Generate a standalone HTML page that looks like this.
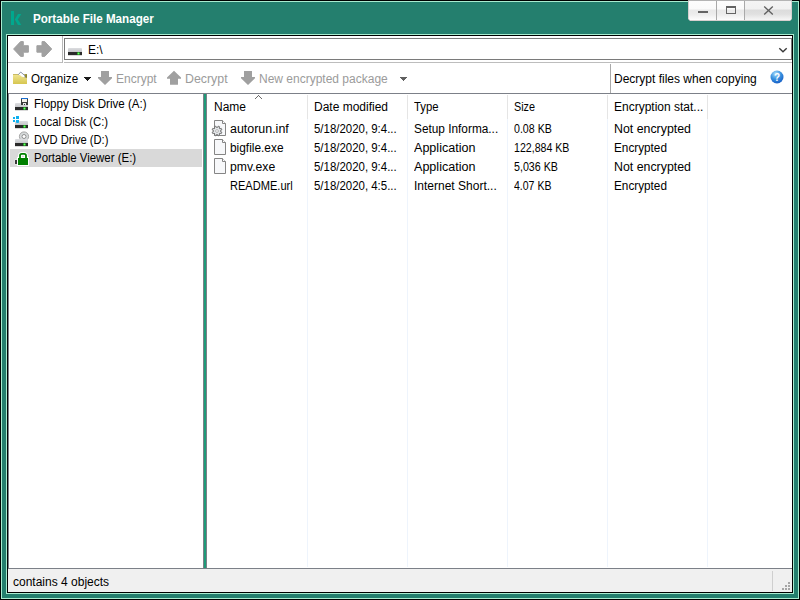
<!DOCTYPE html>
<html><head><meta charset="utf-8"><style>
*{margin:0;padding:0;box-sizing:border-box}
html,body{width:800px;height:600px;overflow:hidden}
body{position:relative;background:#000;font-family:"Liberation Sans",sans-serif;font-size:12px;color:#000}
.a{position:absolute}
.t{position:absolute;white-space:nowrap;line-height:14px;transform-origin:0 0}
.g{color:#9b9b9b}
.w{color:#fff}
</style></head><body>
<!-- frame -->
<div class="a" style="left:1px;top:1px;width:798px;height:598px;background:#a8ecd0"></div>
<div class="a" style="left:2px;top:2px;width:796px;height:596px;background:#247f6e"></div>
<div class="a" style="left:6px;top:34px;width:788px;height:560px;background:#a8ecd0"></div>
<div class="a" style="left:7px;top:35px;width:786px;height:558px;background:#000"></div>
<div class="a" style="left:8px;top:36px;width:784px;height:556px;background:#fff"></div>

<!-- title -->
<svg class="a" style="left:8px;top:8px" width="20" height="20" viewBox="0 0 20 20">
<rect x="3" y="3" width="3" height="14" fill="#00a88e"/>
<path d="M10 6 L13.3 6 L9.8 11.5 L13.3 17 L10 17 L6.8 11.5 Z" fill="#00a88e"/>
</svg>
<div class="t w" style="left:33px;top:12px;font-weight:bold;transform:scaleX(.968)">Portable File Manager</div>

<!-- window buttons -->
<div class="a" style="left:688px;top:0;width:104px;height:21px;background:#d6cfcf;clip-path:polygon(0 0,100% 0,100% calc(100% - 2px),calc(100% - 2px) 100%,2px 100%,0 calc(100% - 2px))"></div>
<div class="a" style="left:689px;top:1px;width:102px;height:19px;background:linear-gradient(#fdfdfd 0,#fafafa 8px,#e9e9e9 9px,#ececec 13px,#fdfdfd 19px);clip-path:polygon(0 0,100% 0,100% calc(100% - 1px),calc(100% - 1px) 100%,1px 100%,0 calc(100% - 1px))"></div>
<div class="a" style="left:745px;top:1px;width:46px;height:19px;background:linear-gradient(#f4f4f4 0,#f1f1f1 8px,#dcdcdc 9px,#e0e0e0 13px,#f6f6f6 19px);clip-path:polygon(0 0,100% 0,100% calc(100% - 1px),calc(100% - 1px) 100%,0 100%)"></div>
<div class="a" style="left:688px;top:0;width:104px;height:1px;background:#b4b4b4"></div>
<div class="a" style="left:716px;top:1px;width:1px;height:19px;background:#a9a9a9"></div>
<div class="a" style="left:744px;top:1px;width:1px;height:19px;background:#a9a9a9"></div>
<div class="a" style="left:698px;top:11px;width:10px;height:2px;background:#646464"></div>
<div class="a" style="left:726px;top:6px;width:10px;height:8px;border:1px solid #646464;border-top-width:2px"></div>
<svg class="a" style="left:763px;top:6px" width="11" height="9" viewBox="0 0 11 9"><path d="M1.2 0.6 L9.8 8.4 M9.8 0.6 L1.2 8.4" stroke="#5f5f5f" stroke-width="1.35"/></svg>

<!-- nav bar -->
<svg class="a" style="left:10px;top:38px" width="46" height="22" viewBox="0 0 46 22">
<path d="M3.6 11 L10.6 3.6 L13.3 3.6 L13.3 7.7 L18.4 7.7 L18.4 14.2 L13.3 14.2 L13.3 18.4 L10.6 18.4 Z" fill="#a1a1a1" stroke="#a1a1a1" stroke-width="1" stroke-linejoin="round"/>
<path d="M41.7 11 L34.7 3.6 L32 3.6 L32 7.7 L26.9 7.7 L26.9 14.2 L32 14.2 L32 18.4 L34.7 18.4 Z" fill="#a1a1a1" stroke="#a1a1a1" stroke-width="1" stroke-linejoin="round"/>
</svg>
<div class="a" style="left:62px;top:36px;width:1px;height:27px;background:#b8b8b8"></div>
<div class="a" style="left:8px;top:62px;width:54px;height:1px;background:#bdbdbd"></div>
<div class="a" style="left:64px;top:62px;width:728px;height:1px;background:#bdbdbd"></div>
<div class="a" style="left:64px;top:38px;width:728px;height:22px;border:1px solid #7a7a7a;border-right:none;background:#fff"></div>
<div class="a" style="left:791px;top:38px;width:1px;height:22px;background:#7a7a7a"></div>
<!-- drive icon in address -->
<div class="a" style="left:68px;top:48px;width:14px;height:4px;background:linear-gradient(#dcdde0,#c4c5c8);border-radius:1px 1px 0 0"></div>
<div class="a" style="left:68px;top:52px;width:14px;height:3px;background:#2b2b2b"></div>
<div class="a" style="left:68px;top:55px;width:14px;height:1px;background:#d8d8d8"></div>
<div class="a" style="left:77px;top:52px;width:3px;height:3px;background:radial-gradient(circle,#6cff6c 0,#3ad83a 35%,#1f5f1f 75%,#2b2b2b 100%)"></div>
<div class="t" style="left:88px;top:43px">E:\</div>
<svg class="a" style="left:778px;top:46px" width="10" height="8" viewBox="0 0 10 8"><path d="M1.3 2.3 L5 5.8 L8.7 2.3" stroke="#3a3a3a" stroke-width="1.4" fill="none"/></svg>

<!-- toolbar -->
<svg class="a" style="left:12px;top:70px" width="16" height="16" viewBox="0 0 16 16">
<defs><linearGradient id="fg" x1="0" y1="0" x2="0" y2="1"><stop offset="0" stop-color="#efe38e"/><stop offset="1" stop-color="#d6c650"/></linearGradient></defs>
<path d="M1 4 L15 4 L15 14 L1 14 Z" fill="#c9bb66"/>
<path d="M6.5 4.5 L8.7 2 L13 5.8 L13 8 L6.5 8 Z" fill="#fff" stroke="#7f8aa0" stroke-width="0.9"/>
<path d="M1 5 L8 5 L9.5 6.6 L15 8.2 L15 14 L1 14 Z" fill="url(#fg)"/>
<path d="M13.2 4.2 L15 4.2 L15 8 L13.2 7 Z" fill="#8a8430"/>
</svg>
<div class="t" style="left:31px;top:72px;transform:scaleX(.967)">Organize</div>
<div class="a" style="left:84px;top:77px;width:7px;height:1px;background:#1a1a1a"></div><div class="a" style="left:85px;top:78px;width:5px;height:1px;background:#1a1a1a"></div><div class="a" style="left:86px;top:79px;width:3px;height:1px;background:#1a1a1a"></div><div class="a" style="left:87px;top:80px;width:1px;height:1px;background:#1a1a1a"></div>
<svg class="a" style="left:94px;top:66px" width="22" height="22" viewBox="0 0 22 22"><path d="M7.2 5 L14.8 5 L15 5.2 L15 11 L18 11 L18 12.2 L11 19 L4 12.2 L4 11 L7 11 L7 5.2 Z" fill="#a0a0a0"/></svg>
<div class="t g" style="left:116px;top:72px">Encrypt</div>
<svg class="a" style="left:163px;top:66px" width="22" height="22" viewBox="0 0 22 22"><path d="M7.2 18.8 L14.8 18.8 L15 18.6 L15 12.8 L18 12.8 L18 11.6 L11 4.8 L4 11.6 L4 12.8 L7 12.8 L7 18.6 Z" fill="#a0a0a0"/></svg>
<div class="t g" style="left:185px;top:72px;transform:scaleX(1.03)">Decrypt</div>
<svg class="a" style="left:237px;top:66px" width="22" height="22" viewBox="0 0 22 22"><path d="M7.2 5 L14.8 5 L15 5.2 L15 11 L18 11 L18 12.2 L11 19 L4 12.2 L4 11 L7 11 L7 5.2 Z" fill="#a0a0a0"/></svg>
<div class="t g" style="left:259px;top:72px">New encrypted package</div>
<div class="a" style="left:400px;top:77px;width:7px;height:1px;background:#606060"></div><div class="a" style="left:401px;top:78px;width:5px;height:1px;background:#606060"></div><div class="a" style="left:402px;top:79px;width:3px;height:1px;background:#606060"></div><div class="a" style="left:403px;top:80px;width:1px;height:1px;background:#606060"></div>
<div class="a" style="left:610px;top:64px;width:1px;height:29px;background:#a9a9a9"></div>
<div class="t" style="left:614px;top:72px">Decrypt files when copying</div>
<svg class="a" style="left:770px;top:70px" width="14" height="14" viewBox="0 0 14 14">
<defs><radialGradient id="hb" cx="0.4" cy="0.25" r="0.8"><stop offset="0" stop-color="#a8dcfb"/><stop offset="0.5" stop-color="#3b93e0"/><stop offset="1" stop-color="#1259c3"/></radialGradient></defs>
<circle cx="7" cy="7" r="6.5" fill="url(#hb)"/>
<text x="7" y="11" font-family="Liberation Sans" font-weight="bold" font-size="10" fill="#fff" text-anchor="middle">?</text>
</svg>
<div class="a" style="left:8px;top:93px;width:784px;height:1px;background:#7c8088"></div>

<!-- tree panel -->
<div class="a" style="left:8px;top:93px;width:1px;height:476px;background:#7c8088"></div>
<div class="a" style="left:10px;top:149px;width:192px;height:18px;background:#d9d9d9"></div>

<!-- tree icons -->
<div class="a" style="left:15px;top:103px;width:13px;height:4px;background:linear-gradient(#dddee1,#c6c7ca);border-radius:1px 1px 0 0"></div>
<div class="a" style="left:15px;top:107px;width:13px;height:3px;background:#2b2b2b"></div>
<div class="a" style="left:15px;top:110px;width:13px;height:1px;background:#dadada"></div>
<div class="a" style="left:23px;top:107px;width:3px;height:3px;background:radial-gradient(circle,#6cff6c 0,#3ad83a 35%,#1f5f1f 75%,#2b2b2b 100%)"></div>
<div class="a" style="left:21px;top:98px;width:7px;height:7px;background:#3c3c3c"></div>
<div class="a" style="left:21px;top:98px;width:7px;height:1px;background:#1b6fd0"></div>
<div class="a" style="left:22px;top:99px;width:5px;height:3px;background:#f4f0ea"></div>
<div class="a" style="left:23px;top:103px;width:3px;height:2px;background:#e6e6e6"></div>
<div class="a" style="left:24px;top:104px;width:1px;height:1px;background:#333"></div>

<div class="a" style="left:13px;top:117px;width:2px;height:2px;background:#0eb0f0"></div>
<div class="a" style="left:16px;top:116px;width:3px;height:3px;background:#0eb0f0"></div>
<div class="a" style="left:13px;top:120px;width:2px;height:2px;background:#0eb0f0"></div>
<div class="a" style="left:16px;top:120px;width:3px;height:3px;background:#0eb0f0"></div>
<div class="a" style="left:15px;top:121px;width:13px;height:4px;background:linear-gradient(#dddee1,#c6c7ca);border-radius:1px 1px 0 0"></div>
<div class="a" style="left:16px;top:120px;width:3px;height:3px;background:#0eb0f0;border-radius:0 0 1px 1px"></div>
<div class="a" style="left:15px;top:125px;width:13px;height:3px;background:#2b2b2b"></div>
<div class="a" style="left:15px;top:128px;width:13px;height:1px;background:#dadada"></div>
<div class="a" style="left:23px;top:125px;width:3px;height:3px;background:radial-gradient(circle,#6cff6c 0,#3ad83a 35%,#1f5f1f 75%,#2b2b2b 100%)"></div>

<svg class="a" style="left:14px;top:130px" width="16" height="14" viewBox="0 0 16 14">
<circle cx="10" cy="6.5" r="4.6" fill="#d6dadb" stroke="#9d9d9d" stroke-width="0.9"/>
<circle cx="10" cy="6.5" r="2" fill="#fff" stroke="#909090" stroke-width="1"/>
</svg>
<div class="a" style="left:15px;top:139px;width:13px;height:4px;background:linear-gradient(#dddee1,#c6c7ca);border-radius:1px 1px 0 0"></div>
<div class="a" style="left:15px;top:143px;width:13px;height:3px;background:#2b2b2b"></div>
<div class="a" style="left:15px;top:146px;width:13px;height:1px;background:#dadada"></div>
<div class="a" style="left:23px;top:143px;width:3px;height:3px;background:radial-gradient(circle,#6cff6c 0,#3ad83a 35%,#1f5f1f 75%,#2b2b2b 100%)"></div>

<svg class="a" style="left:12px;top:148px" width="20" height="20" viewBox="0 0 20 20">
<rect x="2.5" y="11.5" width="3" height="5" fill="#f2f2f2"/>
<rect x="3" y="12" width="2" height="4" fill="#3a3a3a"/>
<path d="M8 10.5 L8 7.6 Q8 5.8 9.8 5.8 L12.2 5.8 Q14 5.8 14 7.6 L14 10.5" stroke="#fff" stroke-width="3.8" fill="none"/>
<rect x="5" y="9" width="12" height="9" fill="#fff"/>
<path d="M8 10.5 L8 7.6 Q8 5.8 9.8 5.8 L12.2 5.8 Q14 5.8 14 7.6 L14 10.5" stroke="#008000" stroke-width="1.8" fill="none"/>
<rect x="6" y="10" width="10" height="7" fill="#008000"/>
</svg>
<div class="t" style="left:34px;top:97px;transform:scaleX(.965)">Floppy Disk Drive (A:)</div>
<div class="t" style="left:34px;top:115px;transform:scaleX(.942)">Local Disk (C:)</div>
<div class="t" style="left:34px;top:133px;transform:scaleX(.93)">DVD Drive (D:)</div>
<div class="t" style="left:34px;top:151px;transform:scaleX(.953)">Portable Viewer (E:)</div>

<!-- splitter -->
<div class="a" style="left:203px;top:93px;width:4px;height:476px;background:#7c8088"></div>
<div class="a" style="left:204px;top:94px;width:2px;height:475px;background:#1f9a78"></div>

<!-- list header -->
<div class="t" style="left:214px;top:100px">Name</div>
<div class="a" style="left:255px;top:98px;width:1px;height:1px;background:#6a6a6a"></div><div class="a" style="left:256px;top:97px;width:1px;height:1px;background:#6a6a6a"></div><div class="a" style="left:257px;top:96px;width:1px;height:1px;background:#6a6a6a"></div><div class="a" style="left:258px;top:95px;width:1px;height:1px;background:#6a6a6a"></div><div class="a" style="left:259px;top:96px;width:1px;height:1px;background:#6a6a6a"></div><div class="a" style="left:260px;top:97px;width:1px;height:1px;background:#6a6a6a"></div><div class="a" style="left:261px;top:98px;width:1px;height:1px;background:#6a6a6a"></div>
<div class="t" style="left:314px;top:100px">Date modified</div>
<div class="t" style="left:414px;top:100px;transform:scaleX(.944)">Type</div>
<div class="t" style="left:514px;top:100px;transform:scaleX(.9)">Size</div>
<div class="t" style="left:614px;top:100px">Encryption stat...</div>
<div class="a" style="left:307px;top:95px;width:1px;height:24px;background:#e5e5e5"></div>
<div class="a" style="left:407px;top:95px;width:1px;height:24px;background:#e5e5e5"></div>
<div class="a" style="left:507px;top:95px;width:1px;height:24px;background:#e5e5e5"></div>
<div class="a" style="left:607px;top:95px;width:1px;height:24px;background:#e5e5e5"></div>
<div class="a" style="left:707px;top:95px;width:1px;height:24px;background:#e5e5e5"></div>
<div class="a" style="left:307px;top:119px;width:1px;height:448px;background:#eef4fc"></div>
<div class="a" style="left:407px;top:119px;width:1px;height:448px;background:#eef4fc"></div>
<div class="a" style="left:507px;top:119px;width:1px;height:448px;background:#eef4fc"></div>
<div class="a" style="left:607px;top:119px;width:1px;height:448px;background:#eef4fc"></div>
<div class="a" style="left:707px;top:119px;width:1px;height:448px;background:#eef4fc"></div>

<!-- rows -->
<div class="t" style="left:230px;top:122px;transform:scaleX(1.036)">autorun.inf</div>
<div class="t" style="left:314px;top:122px;transform:scaleX(0.953)">5/18/2020, 9:4...</div>
<div class="t" style="left:414px;top:122px;transform:scaleX(0.986)">Setup Informa...</div>
<div class="t" style="left:514px;top:122px;transform:scaleX(0.886)">0.08 KB</div>
<div class="t" style="left:614px;top:122px;transform:scaleX(1.03)">Not encrypted</div>

<div class="t" style="left:230px;top:141px;transform:scaleX(0.99)">bigfile.exe</div>
<div class="t" style="left:314px;top:141px;transform:scaleX(0.953)">5/18/2020, 9:4...</div>
<div class="t" style="left:414px;top:141px;transform:scaleX(1.047)">Application</div>
<div class="t" style="left:514px;top:141px;transform:scaleX(0.884)">122,884 KB</div>
<div class="t" style="left:614px;top:141px;transform:scaleX(0.98)">Encrypted</div>

<div class="t" style="left:230px;top:160px;transform:scaleX(1.016)">pmv.exe</div>
<div class="t" style="left:314px;top:160px;transform:scaleX(0.953)">5/18/2020, 9:4...</div>
<div class="t" style="left:414px;top:160px;transform:scaleX(1.047)">Application</div>
<div class="t" style="left:514px;top:160px;transform:scaleX(0.89)">5,036 KB</div>
<div class="t" style="left:614px;top:160px;transform:scaleX(1.03)">Not encrypted</div>

<div class="t" style="left:230px;top:179px;transform:scaleX(0.922)">README.url</div>
<div class="t" style="left:314px;top:179px;transform:scaleX(0.953)">5/18/2020, 4:5...</div>
<div class="t" style="left:414px;top:179px">Internet Short...</div>
<div class="t" style="left:514px;top:179px;transform:scaleX(0.876)">4.07 KB</div>
<div class="t" style="left:614px;top:179px;transform:scaleX(0.98)">Encrypted</div>

<!-- file icons -->
<svg class="a" style="left:214px;top:120px" width="12" height="16" viewBox="0 0 12 16"><path d="M0.5 0.5 L8.5 0.5 L11.5 3.5 L11.5 15.5 L0.5 15.5 Z" fill="#f7f8fa" stroke="#858585"/><path d="M8.5 0.5 L8.5 3.5 L11.5 3.5" fill="#fff" stroke="#858585"/></svg>
<svg class="a" style="left:211px;top:125px" width="12" height="12" viewBox="0 0 12 12"><path d="M10.86 7.17 L10.26 8.61 L8.91 8.12 L8.12 8.91 L8.61 10.26 L7.17 10.86 L6.56 9.56 L5.44 9.56 L4.83 10.86 L3.39 10.26 L3.88 8.91 L3.09 8.12 L1.74 8.61 L1.14 7.17 L2.44 6.56 L2.44 5.44 L1.14 4.83 L1.74 3.39 L3.09 3.88 L3.88 3.09 L3.39 1.74 L4.83 1.14 L5.44 2.44 L6.56 2.44 L7.17 1.14 L8.61 1.74 L8.12 3.09 L8.91 3.88 L10.26 3.39 L10.86 4.83 L9.56 5.44 L9.56 6.56 Z" fill="#e4e7ea" stroke="#6f6f6f" stroke-width="1"/><circle cx="6" cy="6" r="1.4" fill="#fff" stroke="#9a9a9a" stroke-width="0.7"/></svg>
<svg class="a" style="left:214px;top:139px" width="12" height="16" viewBox="0 0 12 16"><path d="M0.5 0.5 L8.5 0.5 L11.5 3.5 L11.5 15.5 L0.5 15.5 Z" fill="#f7f8fa" stroke="#858585"/><path d="M8.5 0.5 L8.5 3.5 L11.5 3.5" fill="#fff" stroke="#858585"/></svg>
<svg class="a" style="left:214px;top:158px" width="12" height="16" viewBox="0 0 12 16"><path d="M0.5 0.5 L8.5 0.5 L11.5 3.5 L11.5 15.5 L0.5 15.5 Z" fill="#f7f8fa" stroke="#858585"/><path d="M8.5 0.5 L8.5 3.5 L11.5 3.5" fill="#fff" stroke="#858585"/></svg>

<!-- status bar -->
<div class="a" style="left:8px;top:568px;width:784px;height:1px;background:#7c8088"></div>
<div class="a" style="left:8px;top:569px;width:784px;height:23px;background:#f0f0f0"></div>
<div class="t" style="left:13px;top:575px">contains 4 objects</div>
<div class="a" style="left:772px;top:571px;width:1px;height:20px;background:#cfcfcf"></div>
<div class="a" style="left:788px;top:582px;width:2px;height:2px;background:#a6a6a6"></div>
<div class="a" style="left:785px;top:585px;width:2px;height:2px;background:#a6a6a6"></div>
<div class="a" style="left:788px;top:585px;width:2px;height:2px;background:#a6a6a6"></div>
<div class="a" style="left:782px;top:588px;width:2px;height:2px;background:#a6a6a6"></div>
<div class="a" style="left:785px;top:588px;width:2px;height:2px;background:#a6a6a6"></div>
<div class="a" style="left:788px;top:588px;width:2px;height:2px;background:#a6a6a6"></div>
</body></html>
